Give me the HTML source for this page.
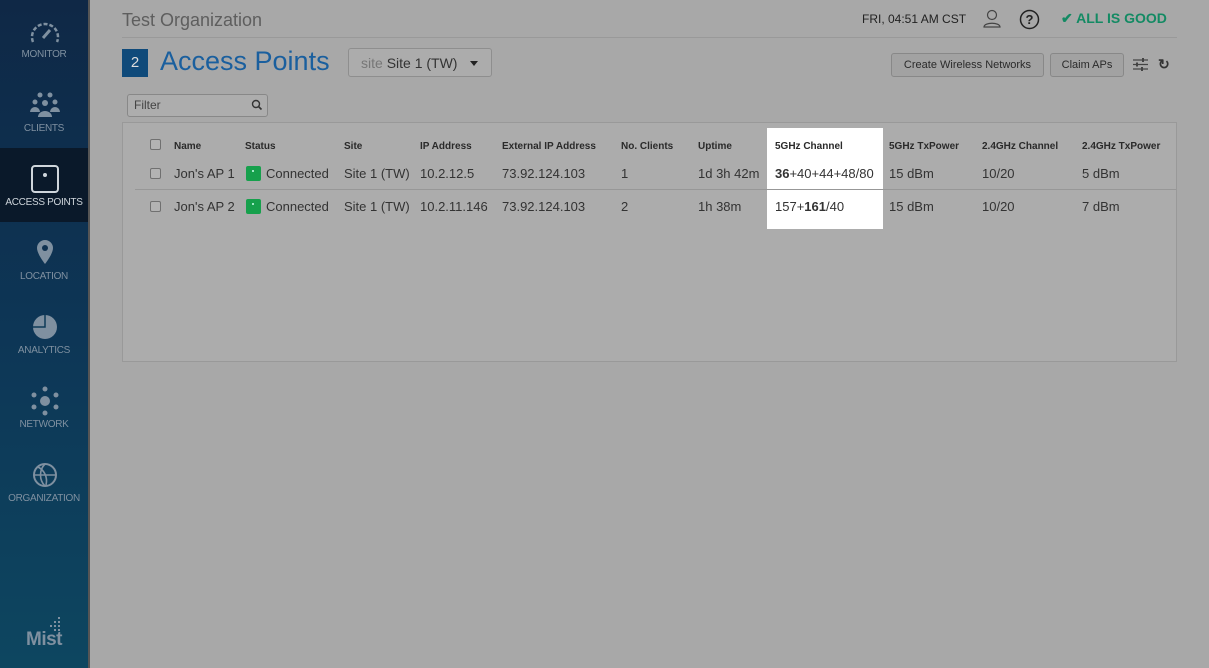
<!DOCTYPE html>
<html><head><meta charset="utf-8"><style>
*{box-sizing:border-box;margin:0;padding:0}
body{width:1209px;height:668px;overflow:hidden;background:#a8a8a8;font-family:"Liberation Sans",sans-serif;position:relative;color:#333}
.sb{position:absolute;left:0;top:0;width:90px;height:668px;background:linear-gradient(#0f2846,#0d3656 50%,#0d4660);border-right:2px solid #555}
.it{position:absolute;left:0;width:88px;height:74px;text-align:center;color:#7f90a0;font-size:10px}
.it svg{position:absolute;left:29px;top:16px}
.it span{position:absolute;left:0;right:0;top:49px;letter-spacing:-0.3px}
.act{background:#0a192a;color:#cfd6dc}
.t{position:absolute;white-space:nowrap}
.th{font-weight:bold;font-size:10px;color:#2a2a2a;top:141px}
.r1{top:166px;font-size:13px;color:#333}
.r2{top:199px;font-size:13px;color:#333}
.btn{position:absolute;top:53px;height:24px;border:1px solid #888;border-radius:3px;background:#a2a2a2;font-size:11px;color:#2a2a2a;text-align:center;line-height:22px}
.cb{position:absolute;left:150px;width:11px;height:11px;border:1px solid #707070;border-radius:2px;background:#b3b3b3}
.gs{position:absolute;left:246px;width:15px;height:15px;background:#16a04c;border-radius:2px}
.gs:after{content:"";position:absolute;left:6px;top:4px;width:2px;height:2px;background:#cfe;border-radius:1px}
</style></head><body>
<div class="sb">
 <div class="it" style="top:0"><svg width="32" height="30" viewBox="0 0 32 30"><path d="M4 26 A13 13 0 1 1 28 26" fill="none" stroke="#7f90a0" stroke-width="2.5" stroke-dasharray="4 2"/><path d="M14 22 L21 14" stroke="#7f90a0" stroke-width="3"/></svg><span>MONITOR</span></div>
 <div class="it" style="top:74px"><svg width="32" height="30" viewBox="0 0 32 30"><g fill="#7f90a0"><circle cx="11" cy="5" r="2.5"/><circle cx="21" cy="5" r="2.5"/><circle cx="6" cy="12" r="2.5"/><circle cx="26" cy="12" r="2.5"/><circle cx="16" cy="13" r="3"/><path d="M1 22a5 5 0 0 1 10 0zM21 22a5 5 0 0 1 10 0zM9 27a7 6 0 0 1 14 0z"/></g></svg><span>CLIENTS</span></div>
 <div class="it act" style="top:148px"><svg width="32" height="30" viewBox="0 0 32 30"><rect x="3" y="2" width="26" height="26" rx="3" fill="none" stroke="#cfd6dc" stroke-width="2"/><circle cx="16" cy="11" r="2" fill="#cfd6dc"/></svg><span>ACCESS POINTS</span></div>
 <div class="it" style="top:222px"><svg width="32" height="30" viewBox="0 0 32 30"><path d="M16 2a8 8 0 0 1 8 8c0 6-8 16-8 16S8 16 8 10a8 8 0 0 1 8-8z" fill="#7f90a0"/><circle cx="16" cy="10" r="3" fill="#0f3150"/></svg><span>LOCATION</span></div>
 <div class="it" style="top:296px"><svg width="32" height="30" viewBox="0 0 32 30"><circle cx="16" cy="15" r="12" fill="#7f90a0"/><path d="M16 3V15H4" fill="none" stroke="#0e3a58" stroke-width="1.5"/></svg><span>ANALYTICS</span></div>
 <div class="it" style="top:370px"><svg width="32" height="30" viewBox="0 0 32 30"><g fill="#7f90a0"><circle cx="16" cy="15" r="5"/><circle cx="16" cy="3" r="2.5"/><circle cx="16" cy="27" r="2.5"/><circle cx="5" cy="9" r="2.5"/><circle cx="27" cy="9" r="2.5"/><circle cx="5" cy="21" r="2.5"/><circle cx="27" cy="21" r="2.5"/></g></svg><span>NETWORK</span></div>
 <div class="it" style="top:444px"><svg width="32" height="30" viewBox="0 0 32 30"><circle cx="16" cy="15" r="11" fill="none" stroke="#7f90a0" stroke-width="2"/><path d="M5 15h22M16 4c-6 6-6 16 0 22M9 7c6 3 10 10 8 18" fill="none" stroke="#7f90a0" stroke-width="1.6"/></svg><span>ORGANIZATION</span></div>
 <div class="t" style="left:26px;top:629px;font-size:19px;font-weight:bold;color:#7f90a0;letter-spacing:-0.5px">Mist</div>
 <svg style="position:absolute;left:46px;top:617px" width="16" height="16"><g fill="#7f90a0"><rect x="12" y="0" width="2" height="2"/><rect x="12" y="4" width="2" height="2"/><rect x="8" y="4" width="2" height="2"/><rect x="12" y="8" width="2" height="2"/><rect x="8" y="8" width="2" height="2"/><rect x="4" y="8" width="2" height="2"/><rect x="12" y="12" width="2" height="2"/><rect x="8" y="12" width="2" height="2"/></g></svg>
</div>

<div class="t" style="left:122px;top:10px;font-size:18px;color:#5e5e5e">Test Organization</div>
<div style="position:absolute;left:122px;right:32px;top:37px;border-top:1px solid #999"></div>
<div class="t" style="left:862px;top:12px;font-size:12px;color:#222">FRI, 04:51 AM CST</div>
<svg style="position:absolute;left:982px;top:9px" width="20" height="20"><circle cx="10" cy="6" r="4.5" fill="none" stroke="#444" stroke-width="1.2"/><path d="M2 18c0-5 16-5 16 0z" fill="none" stroke="#444" stroke-width="1.2"/></svg>
<svg style="position:absolute;left:1019px;top:9px" width="21" height="21"><circle cx="10.5" cy="10.5" r="9" fill="none" stroke="#222" stroke-width="1.5"/><text x="10.5" y="15" text-anchor="middle" font-size="13" font-weight="bold" font-family="Liberation Sans" fill="#222">?</text></svg>
<div class="t" style="left:1061px;top:10px;font-size:14px;font-weight:bold;color:#138a63">✔ ALL IS GOOD</div>

<div style="position:absolute;left:122px;top:49px;width:26px;height:28px;background:#0f4a7a;color:#ddd;font-size:15px;text-align:center;line-height:28px">2</div>
<div class="t" style="left:160px;top:46px;font-size:27px;color:#1a5f9e">Access Points</div>
<div style="position:absolute;left:348px;top:48px;width:144px;height:29px;border:1px solid #8e8e8e;border-radius:3px;background:#acacac"></div>
<div class="t" style="left:361px;top:55px;font-size:14px;color:#777">site <span style="color:#333">Site 1 (TW)</span></div>
<div style="position:absolute;left:470px;top:61px;border:4px solid transparent;border-top:5px solid #222"></div>

<div class="btn" style="left:891px;width:153px">Create Wireless Networks</div>
<div class="btn" style="left:1050px;width:74px">Claim APs</div>
<svg style="position:absolute;left:1133px;top:58px" width="15" height="13"><g stroke="#444" stroke-width="1.2"><path d="M0 2h15M0 6.5h15M0 11h15"/></g><g fill="#444"><rect x="9" y="0" width="2" height="4"/><rect x="3" y="4.5" width="2" height="4"/><rect x="8" y="9" width="2" height="4"/></g></svg>
<div class="t" style="left:1158px;top:56px;font-size:14px;font-weight:bold;color:#333">↻</div>

<div style="position:absolute;left:127px;top:94px;width:141px;height:23px;border:1px solid #888;border-radius:3px;background:#adadad"></div>
<div class="t" style="left:134px;top:98px;font-size:12px;color:#444">Filter</div>
<svg style="position:absolute;left:251px;top:99px" width="12" height="12"><circle cx="5" cy="5" r="3.5" fill="none" stroke="#333" stroke-width="1.4"/><path d="M7.5 7.5l3 3" stroke="#333" stroke-width="1.6"/></svg>

<div style="position:absolute;left:122px;top:122px;width:1055px;height:240px;border:1px solid #999;background:#acacac"></div>
<div style="position:absolute;left:767px;top:128px;width:116px;height:101px;background:#fff"></div>
<div style="position:absolute;left:135px;right:33px;top:189px;border-top:1px solid #979797"></div>

<div class="cb" style="top:139px"></div><div class="cb" style="top:168px"></div><div class="cb" style="top:201px"></div>
<div class="t th" style="left:174px">Name</div><div class="t th" style="left:245px">Status</div><div class="t th" style="left:344px">Site</div><div class="t th" style="left:420px">IP Address</div><div class="t th" style="left:502px">External IP Address</div><div class="t th" style="left:621px">No. Clients</div><div class="t th" style="left:698px">Uptime</div><div class="t th" style="left:775px">5GHz Channel</div><div class="t th" style="left:889px">5GHz TxPower</div><div class="t th" style="left:982px">2.4GHz Channel</div><div class="t th" style="left:1082px">2.4GHz TxPower</div>

<div class="gs" style="top:166px"></div><div class="gs" style="top:199px"></div>
<div class="t r1" style="left:174px">Jon's AP 1</div><div class="t r1" style="left:266px">Connected</div><div class="t r1" style="left:344px">Site 1 (TW)</div><div class="t r1" style="left:420px">10.2.12.5</div><div class="t r1" style="left:502px">73.92.124.103</div><div class="t r1" style="left:621px">1</div><div class="t r1" style="left:698px">1d 3h 42m</div><div class="t r1" style="left:775px"><b>36</b>+40+44+48/80</div><div class="t r1" style="left:889px">15 dBm</div><div class="t r1" style="left:982px">10/20</div><div class="t r1" style="left:1082px">5 dBm</div>
<div class="t r2" style="left:174px">Jon's AP 2</div><div class="t r2" style="left:266px">Connected</div><div class="t r2" style="left:344px">Site 1 (TW)</div><div class="t r2" style="left:420px">10.2.11.146</div><div class="t r2" style="left:502px">73.92.124.103</div><div class="t r2" style="left:621px">2</div><div class="t r2" style="left:698px">1h 38m</div><div class="t r2" style="left:775px">157+<b>161</b>/40</div><div class="t r2" style="left:889px">15 dBm</div><div class="t r2" style="left:982px">10/20</div><div class="t r2" style="left:1082px">7 dBm</div>
</body></html>
